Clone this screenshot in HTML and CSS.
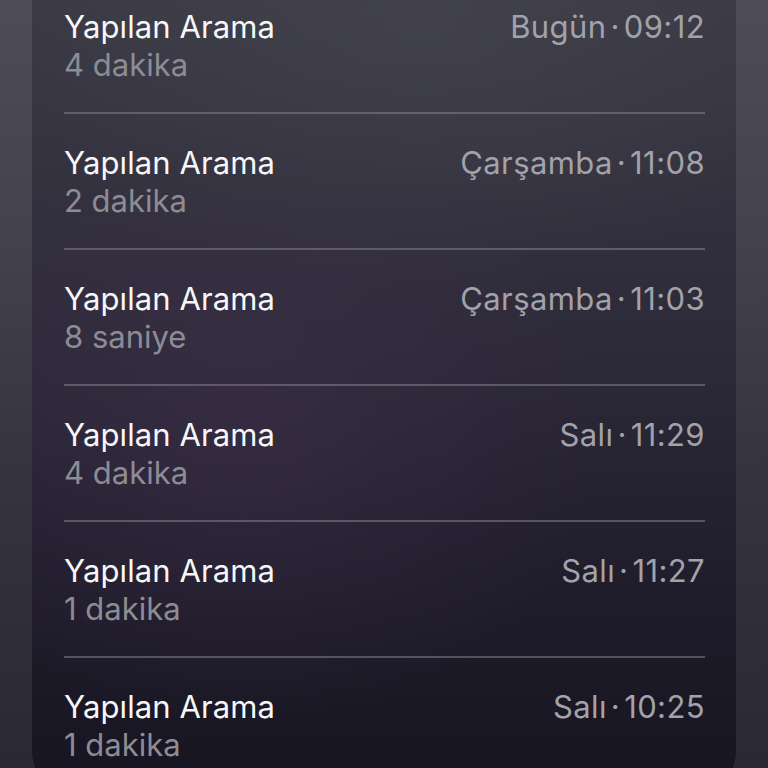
FILE: index.html
```html
<!DOCTYPE html>
<html lang="tr">
<head>
<meta charset="utf-8">
<title>Aramalar</title>
<link rel="stylesheet" href="styles.css">
</head>
<body>
<div class="card">
  <ul class="calls">
    <li class="call">
      <div class="line"><span class="title">Yapılan Arama</span><span class="time">Bugün<span class="dot">·</span>09:12</span></div>
      <div class="sub">4 dakika</div>
    </li>
    <li class="call">
      <div class="line"><span class="title">Yapılan Arama</span><span class="time">Çarşamba<span class="dot">·</span>11:08</span></div>
      <div class="sub">2 dakika</div>
    </li>
    <li class="call">
      <div class="line"><span class="title">Yapılan Arama</span><span class="time">Çarşamba<span class="dot">·</span>11:03</span></div>
      <div class="sub">8 saniye</div>
    </li>
    <li class="call">
      <div class="line"><span class="title">Yapılan Arama</span><span class="time">Salı<span class="dot">·</span>11:29</span></div>
      <div class="sub">4 dakika</div>
    </li>
    <li class="call">
      <div class="line"><span class="title">Yapılan Arama</span><span class="time">Salı<span class="dot">·</span>11:27</span></div>
      <div class="sub">1 dakika</div>
    </li>
    <li class="call">
      <div class="line"><span class="title">Yapılan Arama</span><span class="time">Salı<span class="dot">·</span>10:25</span></div>
      <div class="sub">1 dakika</div>
    </li>
  </ul>
</div>
</body>
</html>
```

FILE: styles.css
```css
html, body {
  margin: 0;
  padding: 0;
  height: 768px;
  overflow: hidden;
}
body {
  background: linear-gradient(180deg, #4e4d57 0%, #44434d 30%, #36343f 60%, #2a2832 100%);
  font-family: Inter, "Liberation Sans", Arial, sans-serif;
  -webkit-font-smoothing: antialiased;
}
.card {
  margin: -80px 32px 0 32px;
  padding: 58px 31px 8px 32px;
  border-radius: 50px;
  background:
    radial-gradient(ellipse 420px 260px at 55% 12%, rgba(80, 80, 90, 0.35), rgba(80, 80, 90, 0) 100%),
    radial-gradient(ellipse 360px 300px at 30% 58%, rgba(72, 52, 84, 0.4), rgba(72, 52, 84, 0) 100%),
    linear-gradient(180deg, #3d3d48 0%, #363541 22%, #2d2a39 48%, #221f2e 70%, #161420 100%);
}
.calls {
  list-style: none;
  margin: 0;
  padding: 0;
}
.call {
  padding: 29px 0 28px 0;
  border-top: 2px solid rgba(130, 130, 140, 0.55);
}
.call:first-child {
  border-top: none;
}
.line {
  display: flex;
  justify-content: space-between;
  align-items: baseline;
  line-height: 39px;
}
.title {
  font-size: 31px;
  color: #f7f7f9;
  letter-spacing: 0.1px;
}
.time {
  font-size: 31px;
  color: #a2a2aa;
  letter-spacing: 0.4px;
}
.dot {
  margin: 0 4px;
}
.sub {
  font-size: 31px;
  line-height: 38px;
  color: #8d8c95;
}
```
